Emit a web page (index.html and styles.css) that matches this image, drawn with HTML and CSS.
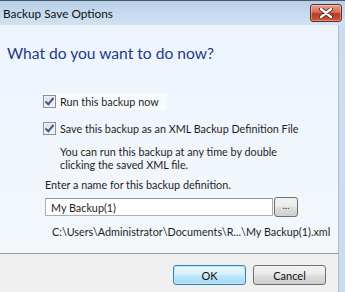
FILE: index.html
```html
<!DOCTYPE html>
<html lang="en">
<head>
  <meta charset="UTF-8" />
  <title>Backup Save Options</title>
  <link rel="stylesheet" href="styles.css">
</head>
<body>
  <div class="window">
    <div class="titlebar">
      <span class="title">Backup Save Options</span>
      <div class="close-btn">
        <svg width="14" height="10" viewBox="0 0 14 10">
          <path d="M2 1 L12 9 M12 1 L2 9" stroke="#5a1a14" stroke-width="4" stroke-linecap="round"/>
          <path d="M2 1 L12 9 M12 1 L2 9" stroke="#ffffff" stroke-width="2.4" stroke-linecap="round"/>
        </svg>
      </div>
    </div>

    <div class="content">
      <h1>What do you want to do now?</h1>

      <div class="options">
        <label class="check-row highlight">
          <span class="checkbox checked"></span>
          Run this backup now
        </label>
        <label class="check-row">
          <span class="checkbox checked"></span>
          Save this backup as an XML Backup Definition File
        </label>
        <p class="hint">You can run this backup at any time by double<br>clicking the saved XML file.</p>

        <div class="name-label">Enter a name for this backup definition.</div>
        <div class="name-row">
          <input class="name-input" type="text" value="My Backup(1)" />
          <button class="browse-btn">...</button>
        </div>
        <div class="path">C:\Users\Administrator\Documents\R...\My Backup(1).xml</div>
      </div>
    </div>

    <div class="footer">
      <button class="btn default">OK</button>
      <button class="btn">Cancel</button>
    </div>
  </div>
</body>
</html>
```

FILE: styles.css
```css
* {
  box-sizing: border-box;
}

body {
  margin: 0;
  font-family: Lato, 'Liberation Sans', sans-serif;
  font-size: 10.8px;
  color: #1e1e1e;
  background: #c9dcf0;
}

.window {
  width: 345px;
  height: 292px;
  display: flex;
  flex-direction: column;
  border-top: 1px solid #4a5868;
  background: #c9dcf0;
}

.titlebar {
  height: 24px;
  flex: none;
  display: flex;
  align-items: center;
  justify-content: space-between;
  padding: 0 3px 0 3px;
  background: linear-gradient(to bottom, #b9cfe8, #c8dbef 60%, #d2e2f2);
}

.title {
  font-size: 11.8px;
  color: #111;
}

.close-btn {
  width: 32px;
  height: 18px;
  margin-top: -1px;
  display: flex;
  align-items: center;
  justify-content: center;
  border: 1px solid #6b2a22;
  border-radius: 3px;
  background: linear-gradient(to bottom, #e4a193, #d0705d 45%, #b63a25 55%, #c75a3c);
  box-shadow: inset 0 0 0 1px rgba(255, 255, 255, 0.35);
}

.content {
  flex: 1;
  margin-right: 6px;
  padding: 18px 0 0 7px;
  background: linear-gradient(to bottom, #edf4fc, #f3f8fd);
  border-right: 1px solid #a9bdd4;
}

h1 {
  margin: 0 0 30px 0;
  font-size: 15.6px;
  font-weight: normal;
  color: #1e3b8a;
  line-height: 20px;
}

.options {
  padding-left: 36px;
}

.check-row {
  display: flex;
  align-items: center;
  gap: 4px;
  height: 17px;
  margin-bottom: 10px;
  white-space: nowrap;
}

.check-row.highlight {
  width: 124px;
  background: #f8fbfe;
}

.checkbox {
  width: 13px;
  height: 13px;
  flex: none;
  border: 1px solid #8e8f8f;
  background: linear-gradient(to bottom right, #dcdcdc, #f6f6f6);
  box-shadow: inset 0 0 0 1px #f4f4f4;
  position: relative;
}

.checkbox.checked::after {
  content: '';
  position: absolute;
  left: 3px;
  top: 0px;
  width: 3px;
  height: 7px;
  border: solid #3d5a98;
  border-width: 0 2px 2px 0;
  transform: rotate(40deg);
}

.hint {
  margin: -2px 0 7px 17px;
  line-height: 13px;
  white-space: nowrap;
}

.name-label {
  margin: 0 0 6px 2px;
  line-height: 13px;
}

.name-row {
  display: flex;
  align-items: center;
  gap: 1px;
  margin-left: 2px;
}

.name-input {
  width: 228px;
  height: 18px;
  border: 1px solid #abadb3;
  border-top-color: #8f9499;
  background: #fff;
  font-family: inherit;
  font-size: 10.8px;
  padding: 0 5px;
  color: #1e1e1e;
}

.browse-btn {
  width: 24px;
  height: 20px;
  padding: 0 0 4px 0;
  border: 1px solid #707070;
  border-radius: 3px;
  background: linear-gradient(to bottom, #f2f2f2, #ebebeb 45%, #dddddd 55%, #cfcfcf);
  font-family: inherit;
  font-size: 10px;
  color: #333;
}

.path {
  margin: 8px 0 0 9px;
  line-height: 13px;
  white-space: nowrap;
}

.footer {
  height: 39px;
  flex: none;
  display: flex;
  justify-content: flex-end;
  align-items: flex-start;
  gap: 7px;
  padding: 11px 12px 0 0;
  margin-right: 6px;
  background: #f0f0f0;
  border-top: 1px solid #9a9a9a;
  border-right: 1px solid #a9bdd4;
}

.btn {
  width: 73px;
  height: 20px;
  border: 1px solid #707070;
  border-radius: 3px;
  background: linear-gradient(to bottom, #f2f2f2, #ebebeb 45%, #dddddd 55%, #cfcfcf);
  font-family: inherit;
  font-size: 11px;
  color: #111;
  padding: 0;
}

.btn.default {
  border-color: #3c7fb1;
  background: linear-gradient(to bottom, #eaf6fd, #d9f0fc 45%, #bee6fd 55%, #a7d9f5);
  box-shadow: inset 0 0 0 1px #bfe6fb;
}
```
